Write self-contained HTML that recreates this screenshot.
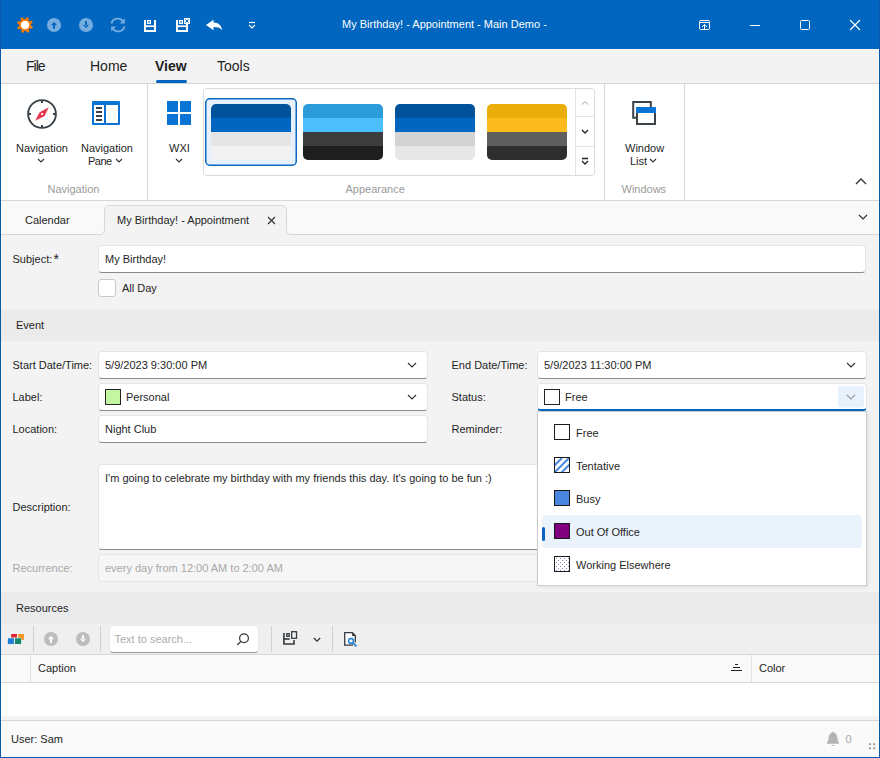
<!DOCTYPE html>
<html><head><meta charset="utf-8">
<style>
*{box-sizing:border-box;margin:0;padding:0}
html,body{width:880px;height:758px;overflow:hidden;background:#f3f3f3;font-family:"Liberation Sans",sans-serif;color:#1f1f1f}
.a{position:absolute}
.t{position:absolute;white-space:nowrap;font-size:11px;line-height:13px}
svg{position:absolute;overflow:visible}
.inp{position:absolute;background:#fff;border:1px solid #e5e5e5;border-bottom-color:#8a8a8a;border-radius:4px}
.hl{position:absolute;background:#d6d6d6}
</style></head><body>
<!-- title bar -->
<div class="a" style="left:0;top:0;width:880px;height:49px;background:#0066bf"></div>
<div class="a" style="left:0;top:0;width:1px;height:758px;background:#0a5aab"></div>
<div class="a" style="left:879px;top:0;width:1px;height:758px;background:#0a5aab"></div>
<div class="a" style="left:0;top:757px;width:880px;height:1px;background:#0a5aab"></div>


<svg style="left:0;top:0" width="880" height="49">
 <!-- sun -->
 <g transform="translate(25,25) rotate(20)" fill="#ff7a00">
  <circle r="5.9"/>
  <g id="tooth"><rect x="-1.4" y="-8" width="2.8" height="3.5" rx="0.7"/></g>
  <use href="#tooth" transform="rotate(45)"/><use href="#tooth" transform="rotate(90)"/><use href="#tooth" transform="rotate(135)"/>
  <use href="#tooth" transform="rotate(180)"/><use href="#tooth" transform="rotate(225)"/><use href="#tooth" transform="rotate(270)"/><use href="#tooth" transform="rotate(315)"/>
  <circle r="4.2" fill="#fff"/>
 </g>
 <!-- up -->
 <circle cx="54" cy="25" r="7" fill="#76ade0"/>
 <path d="M51,25.3 L54,21.8 L57,25.3 Z M53,24.5 H55 V28.8 H53 Z" fill="#0066bf"/>
 <!-- down -->
 <circle cx="86" cy="25" r="7" fill="#76ade0"/>
 <path d="M83,24.7 L86,28.2 L89,24.7 Z M85,21.2 H87 V25.5 H85 Z" fill="#0066bf"/>
 <!-- refresh -->
 <g fill="none" stroke="#76ade0" stroke-width="1.8">
  <path d="M111.5,23.5 A6.5,6.5 0 0 1 123.2,21.5"/>
  <path d="M124.5,26.5 A6.5,6.5 0 0 1 112.8,28.5"/>
 </g>
 <path d="M124.8,18.5 V23.5 H119.8 Z" fill="#76ade0"/>
 <path d="M111.2,31.5 V26.5 H116.2 Z" fill="#76ade0"/>
 <!-- save -->
 <g fill="#fff">
  <rect x="144" y="20" width="2" height="12"/><rect x="154" y="20" width="2" height="12"/><rect x="144" y="30" width="12" height="2"/>
  <rect x="146" y="25.3" width="8" height="1.8"/>
  <rect x="147" y="20" width="4" height="4"/>
 </g>
 <rect x="148.4" y="21" width="1.2" height="2" fill="#0066bf"/>
 <!-- save close -->
 <g fill="#fff">
  <rect x="176" y="20" width="2" height="12"/><rect x="186" y="24" width="2" height="8"/><rect x="176" y="30" width="12" height="2"/>
  <rect x="178" y="25.3" width="8" height="1.8"/>
  <rect x="179" y="20" width="4" height="4"/>
  <rect x="184" y="18" width="6" height="6"/>
 </g>
 <rect x="180.4" y="21" width="1.2" height="2" fill="#0066bf"/>
 <path d="M185.3,19.3 L188.7,22.7 M188.7,19.3 L185.3,22.7" stroke="#0066bf" stroke-width="1"/>
 <!-- undo -->
 <path d="M206,25 L213.5,19.8 L213.5,22.6 C218,22.6 221.6,25.3 222,30.2 C220,27.6 217.5,27 213.5,27 L213.5,30.2 Z" fill="#fff"/>
 <!-- customize -->
 <path d="M249,22.5 H255" stroke="#fff" stroke-width="1.2"/>
 <path d="M249,25 L252,28 L255,25" stroke="#fff" stroke-width="1.2" fill="none"/>
 <!-- window controls -->
 <g fill="none" stroke="#fff" stroke-width="1">
  <rect x="699.5" y="20.5" width="10" height="9" rx="1"/>
  <path d="M699.5,22.5 H709.5"/>
  <path d="M704.5,29.5 V24.5 M702,27 L704.5,24.5 L707,27"/>
  <path d="M750,25.5 H760"/>
  <rect x="800.5" y="20.5" width="9" height="9" rx="1"/>
  <path d="M850,20 L860,30 M860,20 L850,30" stroke-width="1.15"/>
 </g>
</svg>
<div class="t" style="left:342px;top:18px;color:#fff">My Birthday! - Appointment - Main Demo -</div>

<!-- menu bar -->
<div class="a" style="left:1px;top:49px;width:878px;height:34px;background:#f3f3f3"></div>
<div class="hl" style="left:1px;top:83px;width:878px;height:1px"></div>
<div class="t" style="left:26px;top:58px;font-size:14px;line-height:16px;letter-spacing:-1px">File</div>
<div class="t" style="left:90px;top:58px;font-size:14px;line-height:16px">Home</div>
<div class="t" style="left:155px;top:58px;font-size:14px;line-height:16px;font-weight:bold">View</div>
<div class="t" style="left:217px;top:58px;font-size:14px;line-height:16px">Tools</div>
<div class="a" style="left:156px;top:80px;width:31px;height:3px;border-radius:2px;background:#0066bf"></div>

<!-- ribbon -->
<div class="a" style="left:1px;top:84px;width:878px;height:116px;background:#fff"></div>
<div class="hl" style="left:1px;top:200px;width:878px;height:1px"></div>
<div class="a" style="left:147px;top:84px;width:1px;height:116px;background:#d8d8d8"></div>
<div class="a" style="left:604px;top:84px;width:1px;height:116px;background:#d8d8d8"></div>
<div class="a" style="left:684px;top:84px;width:1px;height:116px;background:#d8d8d8"></div>


<svg style="left:0;top:84px" width="880" height="116">
 <g transform="translate(0,-84)">
 <!-- compass -->
 <circle cx="42" cy="114" r="13.9" fill="none" stroke="#3b4349" stroke-width="1.9"/>
 <g fill="#3b4349"><rect x="41" y="101" width="2" height="2"/><rect x="41" y="125" width="2" height="2"/><rect x="29" y="113" width="2" height="2"/><rect x="53" y="113" width="2" height="2"/></g>
 <path d="M35.2,120.8 L39.6,112.2 L48.8,107.2 L44.6,115.9 Z" fill="#e5384f"/>
 <circle cx="42.1" cy="114" r="1.1" fill="#fff"/>
 <!-- nav pane -->
 <rect x="92" y="101" width="28" height="24" rx="1" fill="#0a74d4"/>
 <rect x="94" y="105" width="10" height="18" fill="#fff"/>
 <rect x="106" y="105" width="12" height="18" fill="#fff"/>
 <g fill="#3b4349"><rect x="96" y="107" width="6" height="2"/><rect x="96" y="111" width="6" height="2"/><rect x="96" y="115" width="6" height="2"/><rect x="96" y="119" width="6" height="2"/></g>
 <!-- windows -->
 <g fill="#0a74d4"><rect x="167" y="101" width="11" height="11"/><rect x="180" y="101" width="11" height="11"/><rect x="167" y="114" width="11" height="11"/><rect x="180" y="114" width="11" height="11"/></g>
 <!-- window list -->
 <path d="M637,117.7 H633.2 V102 H650.8 V107" fill="none" stroke="#3b4349" stroke-width="2"/>
 <rect x="637" y="108" width="18" height="16" fill="#fff" stroke="#3b4349" stroke-width="2"/>
 <rect x="636" y="107" width="20" height="6" fill="#0a74d4"/>
 <!-- chevrons -->
 <g fill="none" stroke="#333" stroke-width="1.1">
  <path d="M38,159 L41,162 L44,159"/>
  <path d="M116,159 L119,162 L122,159"/>
  <path d="M176,159 L179,162 L182,159"/>
  <path d="M650,159 L653,162 L656,159"/>
  <path d="M856,184 L861,179 L866,184" stroke-width="1.3"/>
 </g>
 <!-- gallery -->
 <rect x="203.5" y="88.5" width="391" height="87" rx="3" fill="#fff" stroke="#dadada"/>
 <path d="M575.5,89 V175 M576,116.5 H594 M576,146.5 H594" stroke="#e3e3e3" fill="none"/>
 <rect x="205.75" y="98.75" width="90.5" height="66.5" rx="4" fill="#e6f1fb" stroke="#0a67c2" stroke-width="1.5"/>
 <g fill="none" stroke-width="1.1">
  <path d="M582,104.5 L585,101.5 L588,104.5" stroke="#c4c4c4"/>
  <path d="M582,130 L585,133 L588,130" stroke="#222" stroke-width="1.3"/>
  <path d="M582,158.5 H588 M582,161 L585,164 L588,161" stroke="#222" stroke-width="1.3"/>
 </g>
 </g>
</svg>
<div class="a" style="left:211px;top:104px;width:80px;height:56px;border-radius:5px;overflow:hidden">
 <div style="height:14px;background:#00529b"></div><div style="height:14px;background:#0066bf"></div><div style="height:14px;background:#e5e5e5"></div><div style="height:14px;background:#f2f2f2"></div></div>
<div class="a" style="left:303px;top:104px;width:80px;height:56px;border-radius:5px;overflow:hidden">
 <div style="height:14px;background:#2c9bd9"></div><div style="height:14px;background:#4cbefc"></div><div style="height:14px;background:#3d3d3d"></div><div style="height:14px;background:#1f1f1f"></div></div>
<div class="a" style="left:395px;top:104px;width:80px;height:56px;border-radius:5px;overflow:hidden">
 <div style="height:14px;background:#00529b"></div><div style="height:14px;background:#0066bf"></div><div style="height:14px;background:#d3d3d3"></div><div style="height:14px;background:#e7e7e7"></div></div>
<div class="a" style="left:487px;top:104px;width:80px;height:56px;border-radius:5px;overflow:hidden">
 <div style="height:14px;background:#ebad0a"></div><div style="height:14px;background:#fbbb1c"></div><div style="height:14px;background:#5f5f5f"></div><div style="height:14px;background:#2e2e2e"></div></div>
<div class="t" style="left:16px;top:142px">Navigation</div>
<div class="t" style="left:81px;top:142px">Navigation</div>
<div class="t" style="left:88px;top:155px;letter-spacing:-0.5px">Pane</div>
<div class="t" style="left:169px;top:142px">WXI</div>
<div class="t" style="left:625px;top:142px">Window</div>
<div class="t" style="left:630px;top:155px">List</div>
<div class="t" style="left:47.5px;top:183px;color:#9a9a9a">Navigation</div>
<div class="t" style="left:345.5px;top:183px;color:#9a9a9a">Appearance</div>
<div class="t" style="left:621.5px;top:183px;color:#9a9a9a">Windows</div>

<!-- tab strip -->
<div class="a" style="left:1px;top:201px;width:878px;height:33px;background:#f9f9f9"></div>
<svg style="left:0;top:200px" width="880" height="40">
 <path d="M1,34.5 H99.5 Q104.5,34.5 104.5,29.5 V10.5 Q104.5,5.5 109.5,5.5 H281.5 Q286.5,5.5 286.5,10.5 V29.5 Q286.5,34.5 291.5,34.5 H879 V40 H1 Z" fill="#f3f3f3"/>
 <path d="M1,34.5 H99.5 Q104.5,34.5 104.5,29.5 V10.5 Q104.5,5.5 109.5,5.5 H281.5 Q286.5,5.5 286.5,10.5 V29.5 Q286.5,34.5 291.5,34.5 H879" fill="none" stroke="#d6d6d6"/>
 <path d="M268,217 L275,224 M275,217 L268,224" transform="translate(0,-200)" stroke="#333" stroke-width="1.2"/>
 <path d="M859,215 L863,219 L867,215" transform="translate(0,-200)" stroke="#333" stroke-width="1.2" fill="none"/>
</svg>
<div class="t" style="left:25px;top:214px">Calendar</div>
<div class="t" style="left:117px;top:214px">My Birthday! - Appointment</div>

<!-- form -->
<div class="t" style="left:12.5px;top:253px">Subject:</div><div class="t" style="left:53.5px;top:252px;font-size:14px;line-height:15px">*</div>
<div class="inp" style="left:98px;top:245px;width:768px;height:28px"></div>
<div class="t" style="left:105px;top:253px">My Birthday!</div>
<div class="a" style="left:98px;top:279px;width:18px;height:18px;background:#fff;border:1px solid #c8c8c8;border-radius:3px"></div>
<div class="t" style="left:122px;top:282px">All Day</div>

<div class="a" style="left:1px;top:309px;width:878px;height:32px;background:#ebebeb"></div>
<div class="t" style="left:16px;top:319px">Event</div>

<div class="t" style="left:12.5px;top:359px">Start Date/Time:</div>
<div class="t" style="left:12.5px;top:391px">Label:</div>
<div class="t" style="left:12.5px;top:423px">Location:</div>
<div class="t" style="left:12.5px;top:501px">Description:</div>
<div class="t" style="left:12.5px;top:562px;color:#a8a8a8">Recurrence:</div>
<div class="t" style="left:451.5px;top:359px">End Date/Time:</div>
<div class="t" style="left:451.5px;top:391px">Status:</div>
<div class="t" style="left:451.5px;top:423px">Reminder:</div>

<div class="inp" style="left:98px;top:351px;width:330px;height:28px"></div>
<div class="t" style="left:105px;top:359px">5/9/2023 9:30:00 PM</div>
<div class="inp" style="left:98px;top:383px;width:330px;height:28px"></div>
<div class="t" style="left:126px;top:391px">Personal</div>
<div class="inp" style="left:98px;top:415px;width:330px;height:28px"></div>
<div class="t" style="left:105px;top:423px">Night Club</div>

<div class="inp" style="left:537px;top:351px;width:330px;height:28px"></div>
<div class="t" style="left:544px;top:359px">5/9/2023 11:30:00 PM</div>
<div class="inp" style="left:537px;top:383px;width:330px;height:28px;border-bottom:2px solid #0066bf"></div>
<div class="t" style="left:565px;top:391px">Free</div>

<div class="inp" style="left:98px;top:464px;width:768px;height:86px"></div>
<div class="t" style="left:105px;top:472px">I'm going to celebrate my birthday with my friends this day. It's going to be fun :)</div>
<div class="a" style="left:98px;top:554px;width:768px;height:28px;background:#f6f6f6;border:1px solid #e6e6e6;border-radius:4px"></div>
<div class="t" style="left:105px;top:562px;color:#a8a8a8">every day from 12:00 AM to 2:00 AM</div>


<svg style="left:0;top:340px" width="880" height="260">
 <g transform="translate(0,-340)">
 <g fill="none" stroke="#333" stroke-width="1.2">
  <path d="M408,363 L412,367 L416,363"/>
  <path d="M408,395 L412,399 L416,395"/>
  <path d="M847,363 L851,367 L855,363"/>
 </g>
 <rect x="105.5" y="389.5" width="15" height="15" fill="#c4f5a0" stroke="#222"/>
 <rect x="544.5" y="389.5" width="15" height="15" fill="#fff" stroke="#222"/>
 <rect x="838" y="386" width="26" height="21.5" rx="3" fill="#e8f2fc"/>
 <path d="M847,395 L851,399 L855,395" fill="none" stroke="#9a9a9a" stroke-width="1.1"/>
 </g>
</svg>

<!-- popup -->
<div class="a" style="left:537px;top:411px;width:330px;height:175px;background:#fff;border:1px solid #cccccc;box-shadow:1px 1px 4px rgba(0,0,0,0.09)"></div>


<div class="a" style="left:542px;top:515px;width:320px;height:33px;background:#eaf3fc;border-radius:4px"></div>
<div class="a" style="left:542px;top:526.5px;width:3px;height:14px;background:#0a63c0;border-radius:2px"></div>
<svg style="left:540px;top:410px" width="340" height="180">
 <defs>
  
  <pattern id="dots" width="4" height="4" patternUnits="userSpaceOnUse" patternTransform="translate(555,557)">
   <rect width="4" height="4" fill="#fff"/><rect x="0.5" y="0.5" width="1.1" height="1.1" fill="#9384d4"/><rect x="2.5" y="2.5" width="1.1" height="1.1" fill="#9384d4"/>
  </pattern>
  <clipPath id="hc"><rect x="555" y="458" width="14" height="14"/></clipPath>
 </defs>
 <g transform="translate(-540,-410)" stroke="#1a1a1a">
  <rect x="554.5" y="424.5" width="15" height="15" fill="#fff"/>
  <rect x="554.5" y="457.5" width="15" height="15" fill="#fff"/>
  <g clip-path="url(#hc)" stroke="#4a86dc" stroke-width="2"><path d="M552,468 L562,458 M552,475 L569,458 M559,475 L571,463"/></g>
  <rect x="554.5" y="457.5" width="15" height="15" fill="none"/>
  <rect x="554.5" y="490.5" width="15" height="15" fill="#4a86e0"/>
  <rect x="554.5" y="523.5" width="15" height="15" fill="#800080"/>
  <rect x="554.5" y="556.5" width="15" height="15" fill="#fff"/><g fill="#8f80d0" stroke="none"><rect x="556" y="558" width="1" height="1"/><rect x="560" y="558" width="1" height="1"/><rect x="564" y="558" width="1" height="1"/><rect x="568" y="558" width="1" height="1"/><rect x="558" y="560" width="1" height="1"/><rect x="562" y="560" width="1" height="1"/><rect x="566" y="560" width="1" height="1"/><rect x="556" y="562" width="1" height="1"/><rect x="560" y="562" width="1" height="1"/><rect x="564" y="562" width="1" height="1"/><rect x="568" y="562" width="1" height="1"/><rect x="558" y="564" width="1" height="1"/><rect x="562" y="564" width="1" height="1"/><rect x="566" y="564" width="1" height="1"/><rect x="556" y="566" width="1" height="1"/><rect x="560" y="566" width="1" height="1"/><rect x="564" y="566" width="1" height="1"/><rect x="568" y="566" width="1" height="1"/><rect x="558" y="568" width="1" height="1"/><rect x="562" y="568" width="1" height="1"/><rect x="566" y="568" width="1" height="1"/><rect x="556" y="570" width="1" height="1"/><rect x="560" y="570" width="1" height="1"/><rect x="564" y="570" width="1" height="1"/><rect x="568" y="570" width="1" height="1"/></g>
 </g>
</svg>
<div class="t" style="left:576px;top:427px">Free</div>
<div class="t" style="left:576px;top:460px">Tentative</div>
<div class="t" style="left:576px;top:493px">Busy</div>
<div class="t" style="left:576px;top:526px">Out Of Office</div>
<div class="t" style="left:576px;top:559px">Working Elsewhere</div>

<!-- resources -->
<div class="a" style="left:1px;top:592px;width:878px;height:32px;background:#ebebeb"></div>
<div class="t" style="left:16px;top:602px">Resources</div>
<div class="a" style="left:1px;top:624px;width:878px;height:30px;background:#efefef"></div>
<div class="hl" style="left:1px;top:654px;width:878px;height:1px"></div>
<div class="a" style="left:1px;top:655px;width:878px;height:27px;background:#f9f9f9"></div>
<div class="hl" style="left:1px;top:682px;width:878px;height:1px"></div>
<div class="t" style="left:38px;top:662px">Caption</div>
<div class="t" style="left:759px;top:662px">Color</div>
<div class="a" style="left:1px;top:683px;width:878px;height:33px;background:#fff"></div>
<div class="hl" style="left:1px;top:720px;width:878px;height:1px"></div>
<div class="a" style="left:1px;top:721px;width:878px;height:36px;background:#fafafa"></div>
<div class="t" style="left:11px;top:733px">User: Sam</div>

<div class="a" style="left:109px;top:625px;width:150px;height:28px;background:#fff;border:1px solid #e8e8e8;border-bottom-color:#9a9a9a;border-radius:4px"></div>
<div class="t" style="left:114.5px;top:633px;color:#adadad">Text to search...</div>
<svg style="left:0;top:620px" width="880" height="140">
 <g transform="translate(0,-620)">
 <!-- color icon -->
 <path d="M11.3,634 H17 V637.6 H11 Z" fill="#d9232e"/>
 <path d="M18.2,634 H24 L23.7,640 H21.5 V637.8 H18.2 Z" fill="#f7931e"/>
 <path d="M8,638.3 H14 L13.8,644 H7.8 Z" fill="#1c7ed6"/>
 <path d="M15,638.3 H21.2 L21,644 H14.9 Z" fill="#13876b"/>
 <g fill="#d0d0d0"><rect x="33" y="626" width="1" height="26"/><rect x="100" y="626" width="1" height="26"/><rect x="271" y="626" width="1" height="26"/><rect x="332" y="626" width="1" height="26"/></g>
 <circle cx="51" cy="639" r="7" fill="#bdbdbd"/>
 <path d="M48,639.3 L51,635.8 L54,639.3 Z M50,638.5 H52 V642.8 H50 Z" fill="#fff"/>
 <circle cx="83" cy="639" r="7" fill="#bdbdbd"/>
 <path d="M80,638.7 L83,642.2 L86,638.7 Z M82,635.2 H84 V639.5 H82 Z" fill="#fff"/>
 <!-- search -->
 <circle cx="244" cy="638.3" r="4.4" fill="none" stroke="#333" stroke-width="1.2"/>
 <path d="M240.9,641.4 L237.3,645" stroke="#333" stroke-width="1.3"/>
 <!-- layout -->
 <path d="M283.9,633 V644 H294 V640" fill="none" stroke="#353b40" stroke-width="1.6"/>
 <rect x="283.5" y="638.2" width="6.2" height="1.6" fill="#353b40"/>
 <rect x="286.8" y="633.7" width="2.4" height="2.6" fill="none" stroke="#353b40" stroke-width="1.3"/>
 <rect x="291.7" y="631.7" width="4.8" height="6.6" fill="#f4f4f4" stroke="#353b40" stroke-width="1.3"/>
 <path d="M313.8,638 L317,641.2 L320.2,638" fill="none" stroke="#333" stroke-width="1.2"/>
 <!-- print preview -->
 <path d="M353,645.2 H344.7 V632.7 H352.3 L355.3,635.7 V642.5" fill="#fafafa" stroke="#353b40" stroke-width="1.3"/>
 <path d="M352.2,632.2 L355.9,635.9 H352.2 Z" fill="#353b40"/>
 <circle cx="351" cy="640.9" r="2.4" fill="#fafafa" stroke="#1a7fd6" stroke-width="1.4"/>
 <path d="M352.9,642.8 L356.4,646.3" stroke="#1a7fd6" stroke-width="1.7"/>
 <!-- grid header -->
 <rect x="30" y="655" width="1" height="27" fill="#e2e2e2"/>
 <rect x="751" y="655" width="1" height="27" fill="#e2e2e2"/>
 <path d="M735,664.5 H738 M733,667.5 H740 M731,670.5 H742" stroke="#222" stroke-width="1"/>
 <!-- bell -->
 <path d="M833,731.8 C834.2,732.6 837,733.6 837.3,737.5 C837.6,741.5 839.2,742.3 839.2,743.8 H826.8 C826.8,742.3 828.4,741.5 828.7,737.5 C829,733.6 831.8,732.6 833,731.8 Z" fill="#b4b4b4"/>
 <rect x="831.6" y="745" width="2.6" height="1" fill="#b4b4b4"/>
 <g fill="#9c9c9c"><rect x="869" y="743.2" width="2" height="2"/><rect x="873.2" y="743.2" width="2" height="2"/><rect x="869" y="747.3" width="2" height="2"/><rect x="873.2" y="747.3" width="2" height="2"/></g>
 </g>
</svg>
<div class="t" style="left:845.5px;top:733px;color:#a8a8a8">0</div>
</body></html>
